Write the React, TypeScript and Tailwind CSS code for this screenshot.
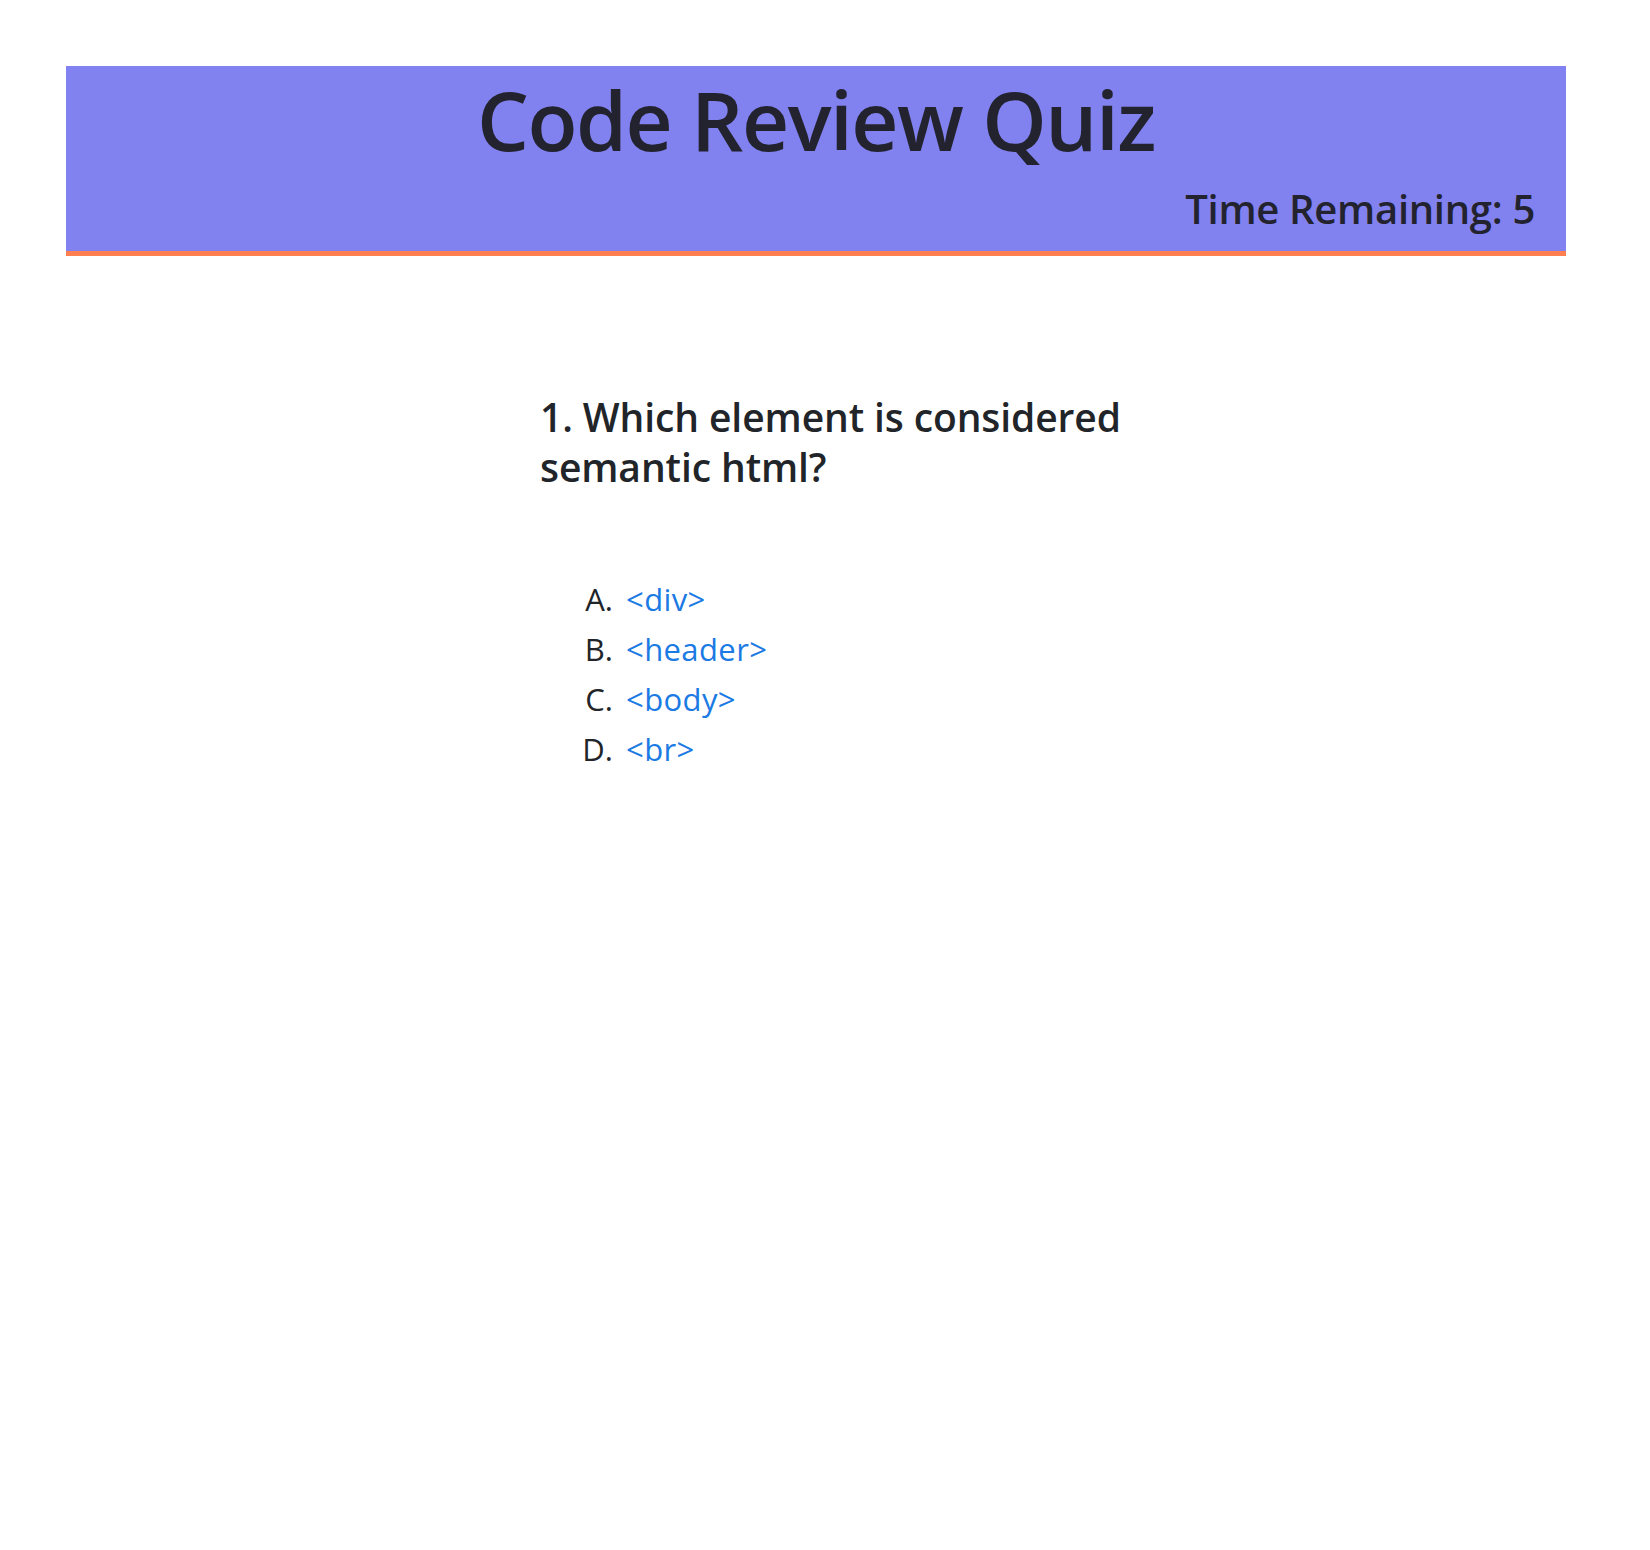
export default function App() {
  const options = ["<div>", "<header>", "<body>", "<br>"];
  return (
    <div className="min-h-[1550px] bg-white pt-[66px] pl-[66px] text-[#212529]" style={{ fontFamily: '"Open Sans", "Noto Sans", sans-serif' }}>
      <header className="w-[1500px] bg-[#8181ef] border-b-[5px] border-[#ff7f50] pt-[3px] pb-[17px] pr-[31px]">
        <h1 className="pl-[31px] text-center text-[82px] leading-[100px] font-semibold tracking-[-1.5px] text-[#22232e]">Code Review Quiz</h1>
        <div className="mt-[15px] text-right text-[40px] leading-[50px] font-semibold tracking-[-0.3px] text-[#22232e]">Time Remaining: 5</div>
      </header>
      <main className="ml-[474px] w-[620px] pt-[136px]">
        <h2 className="text-[39px] leading-[50px] font-semibold tracking-[-0.1px]">1. Which element is considered semantic html?</h2>
        <ol className="mt-[82px] list-[upper-alpha] list-outside pl-[81px] text-[31px] leading-[50px]">
          {options.map((o) => (
            <li key={o} className="pl-[5px]">
              <a href="#" className="text-[#1b7ae3] tracking-[0.4px]">{o}</a>
            </li>
          ))}
        </ol>
      </main>
    </div>
  );
}
